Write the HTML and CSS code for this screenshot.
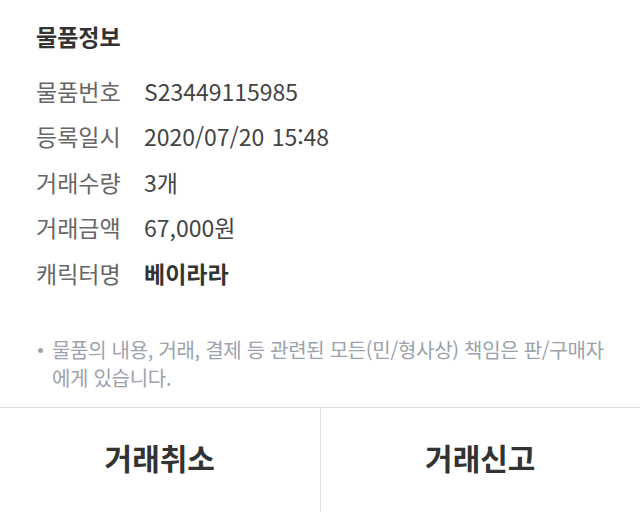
FILE: index.html
```html
<!DOCTYPE html>
<html lang="ko">
<head>
	<meta charset="utf-8">
	<title>물품정보</title>
	<link rel="stylesheet" href="styles.css">
</head>
<body>
	<!--물품 정보-->
	<section class="info">
		<h2 class="info-title">물품정보</h2>
		<dl class="info-list">
			<div class="info-row"><dt>물품번호</dt><dd>S23449115985</dd></div>
			<div class="info-row"><dt>등록일시</dt><dd>2020/07/20 15:48</dd></div>
			<div class="info-row"><dt>거래수량</dt><dd>3개</dd></div>
			<div class="info-row"><dt>거래금액</dt><dd>67,000원</dd></div>
			<div class="info-row"><dt>캐릭터명</dt><dd class="strong">베이라라</dd></div>
		</dl>
		<ul class="notice">
			<li>물품의 내용, 거래, 결제 등 관련된 모든(민/형사상) 책임은 판/구매자에게 있습니다.</li>
		</ul>
	</section>
	<!--하단 버튼-->
	<div class="actions">
		<button class="action">거래취소</button>
		<button class="action">거래신고</button>
	</div>
</body>
</html>
```
FILE: styles.css
```css
*{
	box-sizing: border-box;
}

body{
	margin: 0;
	background: #fff;
	font-family: "Noto Sans CJK KR", "Noto Sans", sans-serif;
	color: #333;
}

.info{
	padding: 20px 36px 0;
}

.info-title{
	margin: 0;
	font-size: 23px;
	font-weight: bold;
	line-height: 32px;
	color: #333;
}

.info-list{
	margin: 16px 0 0;
}

.info-row{
	display: flex;
	align-items: center;
	height: 45.5px;
	font-size: 23px;
}

.info-row dt{
	width: 108px;
	color: #666;
}

.info-row dd{
	margin: 0;
	color: #444;
	word-spacing: 1px;
}

.info-row dd.strong{
	font-weight: bold;
	color: #333;
}

.notice{
	margin: 40px -12px 0 0;
	padding: 0 0 0 16px;
	list-style: none;
	font-size: 20px;
	line-height: 28px;
	color: #9ba2ab;
	letter-spacing: -0.3px;
}

.notice li{
	position: relative;
}

.notice li:before{
	content: "";
	position: absolute;
	left: -14px;
	top: 12px;
	width: 5px;
	height: 5px;
	border-radius: 50%;
	background: #9ba2ab;
}

.actions{
	display: flex;
	margin-top: 15px;
	border-top: 1px solid #ddd;
}

.action{
	flex: 1;
	height: 104px;
	border: none;
	background: #fff;
	font-family: inherit;
	font-size: 30px;
	font-weight: bold;
	color: #333;
	padding: 0 0 6px;
}

.action + .action{
	border-left: 1px solid #e2e2e2;
}
```
